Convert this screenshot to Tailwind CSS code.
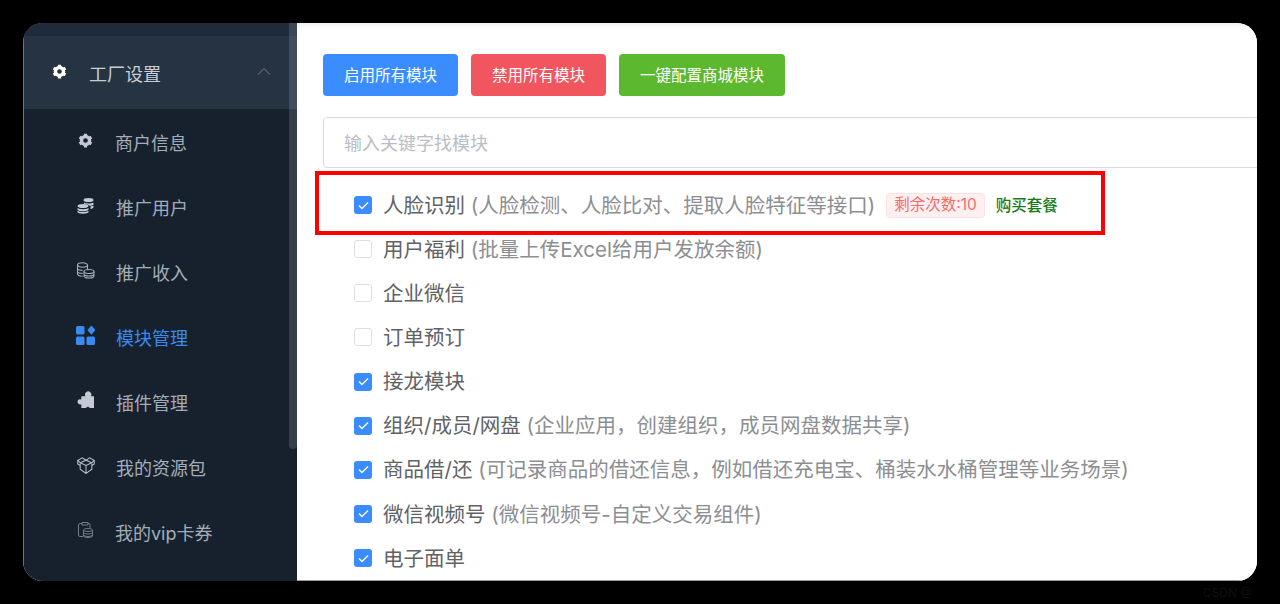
<!DOCTYPE html>
<html lang="zh-CN">
<head>
  <meta charset="UTF-8" />
  <title>模块管理</title>
  <script src="https://cdn.jsdelivr.net/npm/@tailwindcss/browser@4"></script>
</head>
<body class="bg-black h-[604px] overflow-hidden font-['Inter','Noto_Sans_CJK_SC',sans-serif]">
  <div class="pt-[23px] px-[23px] h-[604px]">
    <div class="flex h-[558px] rounded-[20px] overflow-hidden bg-white">

      <!-- sidebar -->
      <nav class="relative w-[274px] shrink-0 bg-[#17212e] border-l border-[#6f757c] text-[18px] text-[#a3adb9]">
        <div class="h-[13px] bg-[#1f2b3a]"></div>
        <div class="h-[73px] bg-[#263343] flex items-center pl-[28px] pr-[26px] text-[#c9ced4]">
          <svg class="w-[15px] h-[15px] text-white -mt-[3px]" viewBox="0 0 24 24" fill="none" stroke="currentColor" stroke-width="5.5"><circle cx="12" cy="12" r="6.5"/><path stroke-width="5" d="M12 1v4M12 19v4M2.5 6.5l3.4 2M18.1 15.5l3.4 2M2.5 17.5l3.4-2M18.1 8.5l3.4-2"/></svg>
          <span class="ml-[22px] mt-[3px]">工厂设置</span>
          <svg class="ml-auto w-[14px] h-[8px] -mt-[4px]" viewBox="0 0 14 8" fill="none" stroke="#566170" stroke-width="1.2"><path d="M1 7.5 7 1.5l6 6"/></svg>
        </div>

        <a class="h-[65px] flex items-center pl-[54px]">
          <svg class="w-[15px] h-[15px] text-[#c3cad3] -mt-[3px]" viewBox="0 0 24 24" fill="none" stroke="currentColor" stroke-width="5.5"><circle cx="12" cy="12" r="6.5"/><path stroke-width="5" d="M12 1v4M12 19v4M2.5 6.5l3.4 2M18.1 15.5l3.4 2M2.5 17.5l3.4-2M18.1 8.5l3.4-2"/></svg>
          <span class="ml-[22px] mt-[3px]">商户信息</span>
        </a>
        <a class="h-[65px] flex items-center pl-[53px]">
          <svg class="w-[17px] h-[17px] text-[#c3cad3] -mt-[3px]" viewBox="0 0 17 17" fill="currentColor"><ellipse cx="11.5" cy="3" rx="5" ry="2"/><path d="M7 5.6c1 .6 3 .9 4.500.9s3.800-.4 5-1v1.700c0 .8-1.600 1.500-4 1.600-.6-1-2.800-1.600-5.500-1.700z"/><path d="M13.500 9.600c1.300-.2 2.400-.6 3-1v1.700c0 .8-1.200 1.400-3 1.600z"/><ellipse cx="6" cy="9" rx="5.500" ry="2.100"/><path d="M.5 11c1 .8 3 1.200 5.500 1.200s4.500-.4 5.500-1.200v1.500c0 1-2.400 1.800-5.500 1.800S.5 13.500.5 12.500z"/><path d="M.5 13.800c1 .8 3 1.200 5.500 1.200s4.500-.4 5.500-1.200v1.200c0 1-2.400 1.700-5.500 1.700S.5 16 .5 15z"/></svg>
          <span class="ml-[22px] mt-[3px]">推广用户</span>
        </a>
        <a class="h-[65px] flex items-center pl-[52px]">
          <svg class="w-[19px] h-[17px] text-[#a3adb9] -mt-[3px]" viewBox="0 0 19 17" fill="none" stroke="currentColor" stroke-width="1.100"><ellipse cx="6.500" cy="3" rx="5" ry="2.200"/><path d="M1.500 3v9c0 1 1.800 2 5 2.200M1.500 6.200c0 1.200 2.200 2.200 5 2.200M1.500 9.200c0 1.200 2.200 2.200 5 2.200M11.500 3v4.500"/><ellipse cx="13" cy="9.500" rx="5" ry="2"/><path d="M8 9.500v4.500c0 1 2.200 2 5 2s5-1 5-2V9.500M8 12c0 1 2.200 2 5 2s5-1 5-2"/></svg>
          <span class="ml-[21px] mt-[3px]">推广收入</span>
        </a>
        <a class="h-[65px] flex items-center pl-[52px] text-[#3a8af0]">
          <svg class="w-[19px] h-[19px] -mt-[3px]" viewBox="0 0 19 19" fill="currentColor"><rect x="0" y="0" width="8.500" height="8.500" rx="1.500"/><rect x="10.500" y="10.500" width="8.500" height="8.500" rx="1.500"/><rect x="0" y="10.500" width="8.500" height="8.500" rx="1.500"/><path d="M14.700.2a1 1 0 0 1 1.400 0l2.700 3.100a1.200 1.200 0 0 1 0 1.500l-2.700 3.100a1 1 0 0 1-1.400 0L12 4.800a1.200 1.200 0 0 1 0-1.500z"/></svg>
          <span class="ml-[21px] mt-[3px]">模块管理</span>
        </a>
        <a class="h-[65px] flex items-center pl-[52px]">
          <svg class="w-[18px] h-[18px] text-[#c3cad3] -mt-[3px]" viewBox="0 0 17 17" fill="currentColor"><path d="M5 5h4a3 3 0 1 1 5 0h3v11h-4a2.300 2.300 0 0 0-3.500 0H5v-3.500a2.500 2.500 0 1 1 0-4.500z"/></svg>
          <span class="ml-[22px] mt-[3px]">插件管理</span>
        </a>
        <a class="h-[65px] flex items-center pl-[53px]">
          <svg class="w-[18px] h-[17px] text-[#b3bbc6] -mt-[3px]" viewBox="0 0 17 16" fill="none" stroke="currentColor" stroke-width="1"><path d="M8.500 3 5 .8.700 3.200 3 5.500 8.500 8 14 5.500l2.300-2.300L12 .8z"/><path d="M3 5.500 8.500 3 14 5.500M3 6v5.500l5.500 4 5.500-4V6M8.500 8v7.500M.7 3.200v3.300L3 8M16.300 3.200v3.300L14 8"/></svg>
          <span class="ml-[21px] mt-[3px]">我的资源包</span>
        </a>
        <a class="h-[65px] flex items-center pl-[54px]">
          <svg class="w-[15px] h-[16px] text-[#717c89] -mt-[3px]" viewBox="0 0 15 16" fill="none" stroke="currentColor" stroke-width="1"><path d="M4 1.500H2a1.500 1.500 0 0 0-1.500 1.500v10A1.500 1.500 0 0 0 2 14.500h3M10 1.500h1a1 1 0 0 1 1 1V6M4 .5h6v2.500H4z"/><ellipse cx="10" cy="8" rx="4.500" ry="1.500"/><path d="M5.500 8v6c0 .8 2 1.500 4.500 1.500s4.500-.7 4.500-1.500V8M5.500 10.500c0 .8 2 1.500 4.500 1.500s4.500-.7 4.500-1.500M5.500 13c0 .8 2 1.500 4.500 1.500s4.500-.7 4.500-1.500"/></svg>
          <span class="ml-[22px] mt-[3px]">我的vip卡券</span>
        </a>

        <!-- scrollbar -->
        <div class="absolute top-0 right-0 w-[8px] h-[426px] rounded-b-[4px] bg-white/[0.13]"></div>
      </nav>

      <!-- main -->
      <main class="flex-1 min-w-0 pl-[26px] pt-[31px] bg-white shadow-[inset_0_7px_6px_-4px_rgba(0,0,0,0.07)] border-b border-[#9a9a9a] overflow-hidden">
        <div class="flex gap-[13px] text-[15.5px] text-white">
          <button class="h-[42px] w-[135px] pt-[1px] rounded-[4px] bg-[#3a8cff]">启用所有模块</button>
          <button class="h-[42px] w-[135px] pt-[1px] rounded-[4px] bg-[#f1565e]">禁用所有模块</button>
          <button class="h-[42px] w-[166px] pt-[1px] rounded-[4px] bg-[#5cb82e]">一键配置商城模块</button>
        </div>

        <div class="mt-[21px] -mr-[10px] h-[51px] border border-[#d8dae3] rounded-l-[4px] pl-[20px] pt-[2px] flex items-center text-[18px] text-[#b9bdc5]">输入关键字找模块</div>

        <ul class="mt-[15px] pl-[31px] text-[20.5px] text-[#606266]">
          <li class="relative h-[44.125px] flex items-center">
            <span class="w-[18px] h-[18px] rounded-[3px] bg-[#3a8cff] flex items-center justify-center"><svg class="w-[11px] h-[9px]" viewBox="0 0 11 9" fill="none" stroke="white" stroke-width="1.300"><path d="M1 4.500 4 7.500 10 1.500"/></svg></span>
            <span class="ml-[11px] mt-[2px]">人脸识别 <span class="text-[#8c8e92]">(人脸检测、人脸比对、提取人脸特征等接口)</span></span>
            <span class="ml-[11px] h-[25px] px-[7px] rounded-[4px] border border-[#fde2e2] bg-[#fef0f0] text-[#f56c6c] text-[15.5px] flex items-center">剩余次数:10</span>
            <a class="ml-[11px] mt-[2px] text-[15.5px] font-medium text-[#1a7a1a]">购买套餐</a>
            <!-- red annotation box drawn over the row -->
            <div class="absolute left-[-39px] top-[-12px] w-[790px] h-[64px] border-[4px] border-[#ff0000]"></div>
          </li>
          <li class="h-[44.125px] flex items-center">
            <span class="w-[18px] h-[18px] rounded-[3px] border border-[#dcdfe6] bg-white"></span>
            <span class="ml-[11px] mt-[2px]">用户福利 <span class="text-[#8c8e92]">(批量上传Excel给用户发放余额)</span></span>
          </li>
          <li class="h-[44.125px] flex items-center">
            <span class="w-[18px] h-[18px] rounded-[3px] border border-[#dcdfe6] bg-white"></span>
            <span class="ml-[11px] mt-[2px]">企业微信</span>
          </li>
          <li class="h-[44.125px] flex items-center">
            <span class="w-[18px] h-[18px] rounded-[3px] border border-[#dcdfe6] bg-white"></span>
            <span class="ml-[11px] mt-[2px]">订单预订</span>
          </li>
          <li class="h-[44.125px] flex items-center">
            <span class="w-[18px] h-[18px] rounded-[3px] bg-[#3a8cff] flex items-center justify-center"><svg class="w-[11px] h-[9px]" viewBox="0 0 11 9" fill="none" stroke="white" stroke-width="1.300"><path d="M1 4.500 4 7.500 10 1.500"/></svg></span>
            <span class="ml-[11px] mt-[2px]">接龙模块</span>
          </li>
          <li class="h-[44.125px] flex items-center">
            <span class="w-[18px] h-[18px] rounded-[3px] bg-[#3a8cff] flex items-center justify-center"><svg class="w-[11px] h-[9px]" viewBox="0 0 11 9" fill="none" stroke="white" stroke-width="1.300"><path d="M1 4.500 4 7.500 10 1.500"/></svg></span>
            <span class="ml-[11px] mt-[2px]">组织/成员/网盘 <span class="text-[#8c8e92]">(企业应用，创建组织，成员网盘数据共享)</span></span>
          </li>
          <li class="h-[44.125px] flex items-center">
            <span class="w-[18px] h-[18px] rounded-[3px] bg-[#3a8cff] flex items-center justify-center"><svg class="w-[11px] h-[9px]" viewBox="0 0 11 9" fill="none" stroke="white" stroke-width="1.300"><path d="M1 4.500 4 7.500 10 1.500"/></svg></span>
            <span class="ml-[11px] mt-[2px]">商品借/还 <span class="text-[#8c8e92]">(可记录商品的借还信息，例如借还充电宝、桶装水水桶管理等业务场景)</span></span>
          </li>
          <li class="h-[44.125px] flex items-center">
            <span class="w-[18px] h-[18px] rounded-[3px] bg-[#3a8cff] flex items-center justify-center"><svg class="w-[11px] h-[9px]" viewBox="0 0 11 9" fill="none" stroke="white" stroke-width="1.300"><path d="M1 4.500 4 7.500 10 1.500"/></svg></span>
            <span class="ml-[11px] mt-[2px]">微信视频号 <span class="text-[#8c8e92]">(微信视频号-自定义交易组件)</span></span>
          </li>
          <li class="h-[44.125px] flex items-center">
            <span class="w-[18px] h-[18px] rounded-[3px] bg-[#3a8cff] flex items-center justify-center"><svg class="w-[11px] h-[9px]" viewBox="0 0 11 9" fill="none" stroke="white" stroke-width="1.300"><path d="M1 4.500 4 7.500 10 1.500"/></svg></span>
            <span class="ml-[11px] mt-[2px]">电子面单</span>
          </li>
        </ul>
      </main>
    </div>
    <p class="mt-[4px] pr-[5px] text-right text-[12px] leading-[16px] text-[#0f0f0f]">CSDN @</p>
  </div>
</body>
</html>
